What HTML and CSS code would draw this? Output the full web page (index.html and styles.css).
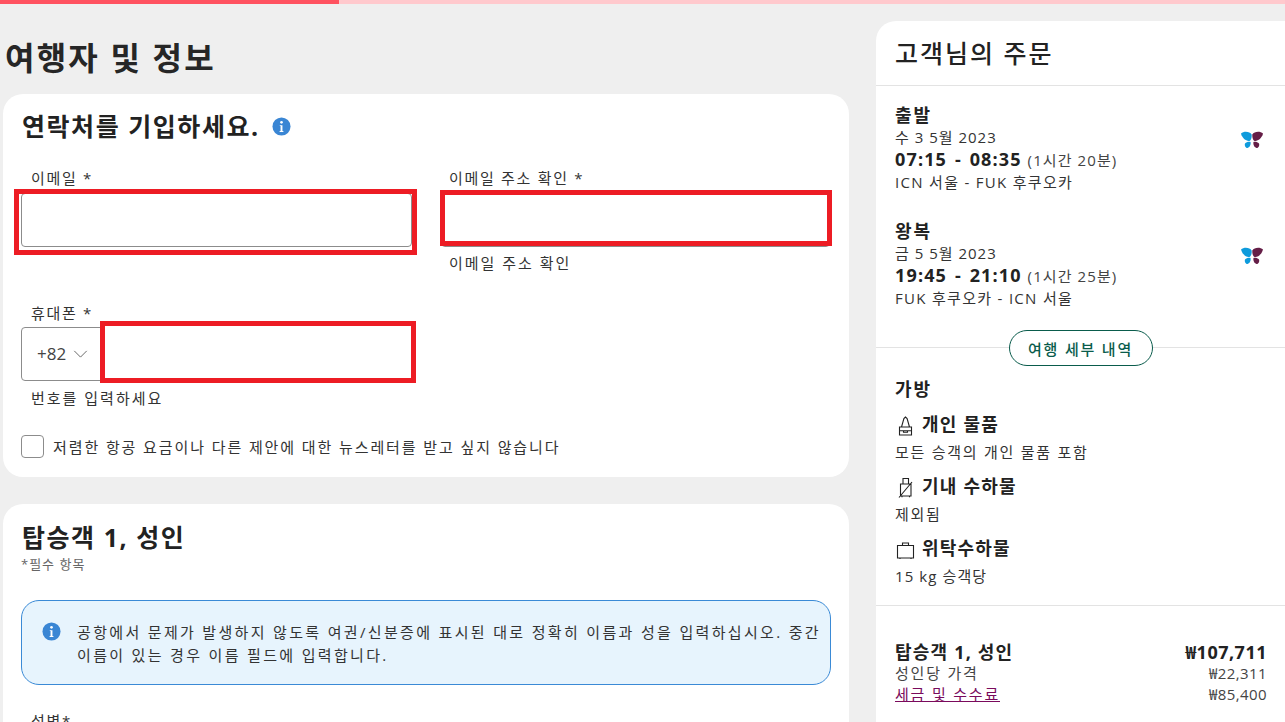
FILE: index.html
```html
<!DOCTYPE html>
<html lang="ko">
<head>
<meta charset="utf-8">
<title>여행자 및 정보</title>
<link rel="stylesheet" href="styles.css">
</head>
<body>
<div class="progress"><div class="progress-fill"></div></div>
<div class="layout">
  <main class="main">
    <h1 class="page-title">여행자 및 정보</h1>
    <section class="card contact">
      <div class="card-head">
        <h2 class="card-title">연락처를 기입하세요.</h2>
        <svg class="info" viewBox="0 0 20 20"><circle cx="10" cy="10" r="9.5" fill="#3a86d4"/><circle cx="10" cy="5.6" r="1.4" fill="#fff"/><path d="M8.2 8.6h2.8v6.2h1v1H8v-1h1v-5.2H8.2z" fill="#fff"/></svg>
      </div>
      <div class="form-grid">
        <div class="field">
          <label class="field-label">이메일 *</label>
          <div class="input-wrap">
            <div class="input"></div>
            <span class="mark mark-email"></span>
          </div>
        </div>
        <div class="field field-alt">
          <label class="field-label">이메일 주소 확인 *</label>
          <div class="input-wrap">
            <div class="input"></div>
            <span class="mark mark-confirm"></span>
          </div>
          <p class="helper">이메일 주소 확인</p>
        </div>
        <div class="field phone-field">
          <label class="field-label">휴대폰 *</label>
          <div class="input-wrap">
            <div class="input phone-input">
              <span class="dial">+82</span>
              <svg class="chev" viewBox="0 0 16 9"><path d="M1 1l7 7 7-7" fill="none" stroke="#666" stroke-width="1.1"/></svg>
            </div>
            <span class="mark mark-phone"></span>
          </div>
          <p class="helper">번호를 입력하세요</p>
        </div>
      </div>
      <div class="check-row">
        <span class="checkbox"></span>
        <span class="check-text">저렴한 항공 요금이나 다른 제안에 대한 뉴스레터를 받고 싶지 않습니다</span>
      </div>
    </section>
    <section class="card passenger">
      <h2 class="card-title">탑승객 1, 성인</h2>
      <p class="required">*필수 항목</p>
      <div class="notice">
        <svg class="info notice-icon" viewBox="0 0 20 20"><circle cx="10" cy="10" r="9.5" fill="#3a86d4"/><circle cx="10" cy="5.6" r="1.4" fill="#fff"/><path d="M8.2 8.6h2.8v6.2h1v1H8v-1h1v-5.2H8.2z" fill="#fff"/></svg>
        <p class="notice-text">공항에서 문제가 발생하지 않도록 여권/신분증에 표시된 대로 정확히 이름과 성을 입력하십시오. 중간 이름이 있는 경우 이름 필드에 입력합니다.</p>
      </div>
      <label class="field-label gender">성별*</label>
    </section>
  </main>
  <aside class="side">
    <h2 class="side-title">고객님의 주문</h2>
    <div class="trip">
      <div class="leg">
        <div class="leg-info">
          <h3 class="leg-title">출발</h3>
          <p class="line">수 3 5월 2023</p>
          <p class="time"><b>07:15 - 08:35</b> <span class="dur">(1시간 20분)</span></p>
          <p class="line route">ICN 서울 - FUK 후쿠오카</p>
        </div>
        <svg class="fly" viewBox="0 0 22 18"><path d="M0 2.6C3-.2 9 .6 10.6 3.5c.3 2-.2 5-1.600 6.200C6 10.800 1.300 8 0 2.600z" fill="#0e9bdc"/><path d="M4 12.500c1.500-1.800 4.500-2 5.500-1.400.5 2-.5 5.500-3 5.900-2 .2-3.200-2.700-2.500-4.500z" fill="#0e9bdc"/><path d="M22 2.600C19-.2 13 .6 11.400 3.500c-.3 2 .2 5 1.600 6.200 3 1.100 7.700-1.700 9-7.100z" fill="#651e47"/><path d="M18 12.500c-1.500-1.800-4.500-2-5.500-1.400-.5 2 .5 5.500 3 5.900 2 .2 3.200-2.700 2.500-4.500z" fill="#651e47"/></svg>
      </div>
      <div class="leg">
        <div class="leg-info">
          <h3 class="leg-title">왕복</h3>
          <p class="line">금 5 5월 2023</p>
          <p class="time"><b>19:45 - 21:10</b> <span class="dur">(1시간 25분)</span></p>
          <p class="line route">FUK 후쿠오카 - ICN 서울</p>
        </div>
        <svg class="fly" viewBox="0 0 22 18"><path d="M0 2.6C3-.2 9 .6 10.6 3.5c.3 2-.2 5-1.600 6.200C6 10.800 1.300 8 0 2.600z" fill="#0e9bdc"/><path d="M4 12.500c1.500-1.800 4.500-2 5.500-1.400.5 2-.5 5.500-3 5.900-2 .2-3.200-2.700-2.500-4.500z" fill="#0e9bdc"/><path d="M22 2.600C19-.2 13 .6 11.400 3.500c-.3 2 .2 5 1.600 6.200 3 1.100 7.700-1.700 9-7.100z" fill="#651e47"/><path d="M18 12.500c-1.500-1.800-4.500-2-5.500-1.400-.5 2 .5 5.500 3 5.900 2 .2 3.200-2.700 2.500-4.500z" fill="#651e47"/></svg>
      </div>
    </div>
    <div class="divider-btn"><button class="pill">여행 세부 내역</button></div>
    <div class="bags">
      <h3 class="leg-title">가방</h3>
      <div class="bag-head">
        <svg class="bag-icon" viewBox="0 0 20 20"><path d="M10.500 1l-1.600 1.500-2.400 8.500h8l-2.400-8.500zM4.500 11h12v8h-12zM4.500 14.800h12M8.500 14.800v1.500h4v-1.500" fill="none" stroke="#222" stroke-width="1.100"/></svg>
        <span class="bag-title">개인 물품</span>
      </div>
      <p class="line bag-desc">모든 승객의 개인 물품 포함</p>
      <div class="bag-head">
        <svg class="bag-icon" viewBox="0 0 20 20"><path d="M8 .5h5.500v5.500H8zM5.500 6h10.500v12H5.500zM4 19.500L17 4M7 18v1.200M14.500 18v1.200" fill="none" stroke="#222" stroke-width="1.100"/></svg>
        <span class="bag-title">기내 수하물</span>
      </div>
      <p class="line bag-desc">제외됨</p>
      <div class="bag-head">
        <svg class="bag-icon" viewBox="0 0 20 20"><path d="M2.500 5.500h16v12.500h-16zM7.500 5.500V3h6v2.500M5 18v1M16 18v1" fill="none" stroke="#222" stroke-width="1.100"/></svg>
        <span class="bag-title">위탁수하물</span>
      </div>
      <p class="line bag-desc bag-desc-num">15 kg 승객당</p>
    </div>
    <div class="price">
      <div class="price-row price-total"><span class="price-name">탑승객 1, 성인</span><span>₩107,711</span></div>
      <div class="price-row"><span class="price-name">성인당 가격</span><span>₩22,311</span></div>
      <div class="price-row"><a class="fee-link price-name">세금 및 수수료</a><span>₩85,400</span></div>
    </div>
  </aside>
</div>
</body>
</html>
```
FILE: styles.css
```css
* { box-sizing: border-box; }
html, body { margin: 0; height: 722px; overflow: hidden; }
body {
  background: #efefef;
  color: #222;
  font-family: "Open Sans", "Noto Sans CJK KR", sans-serif;
  font-size: 15px;
}
p, h1, h2, h3 { margin: 0; }

.progress { height: 4px; background: #ffc9cd; }
.progress-fill { width: 339px; height: 100%; background: #ff5260; }

.layout { display: flex; gap: 27px; padding-left: 3px; align-items: flex-start; }
.main { width: 846px; flex: none; }

.page-title { font-size: 32px; line-height: 42px; font-weight: 700; margin: 33px 0 15px 2px; letter-spacing: 2.2px; color: #262626; }

.card { background: #fff; border-radius: 20px; padding: 0 18px; }
.contact { height: 383px; padding-top: 14px; margin-bottom: 27px; }
.card-head { display: flex; align-items: center; gap: 12px; height: 36px; }
.card-title { font-size: 25px; line-height: 36px; font-weight: 700; color: #222; letter-spacing: 1.55px; margin-left: 1px; }
.info { width: 19px; height: 19px; flex: none; }

.form-grid { display: grid; grid-template-columns: 391px 389px; column-gap: 29px; margin-top: 23px; }
.field-label { display: block; font-size: 15px; line-height: 22px; padding-left: 10px; letter-spacing: 1.7px; color: #333; }
.field-alt .field-label, .field-alt .helper { padding-left: 8px; }
.input-wrap { position: relative; height: 54px; margin-top: 4px; }
.input { height: 54px; border: 1px solid #8c8c8c; border-radius: 4px; background: #fff; }
.helper { font-size: 15px; line-height: 22px; padding-left: 10px; margin-top: 5px; letter-spacing: 2px; color: #333; }
.phone-field { grid-column: 1; margin-top: 28px; }
.phone-field .input-wrap { margin-top: 3px; }
.phone-input { display: flex; align-items: center; padding-left: 15px; gap: 7px; font-size: 17px; color: #444; }
.dial { line-height: 22px; }
.chev { width: 15px; height: 8px; }
.phone-field .helper { margin-top: 6px; }

.mark { position: absolute; border: 5px solid #ed1c24; pointer-events: none; }
.mark-email { left: -7px; right: -5px; top: -4px; bottom: -8px; }
.mark-confirm { left: -1px; right: -2px; top: -3px; bottom: 1px; }
.mark-phone { left: 79px; right: -4px; top: -6px; bottom: -2px; background: #fff; }

.check-row { display: flex; align-items: center; gap: 9px; margin-top: 26px; }
.checkbox { width: 23px; height: 23px; border: 1px solid #8c8c8c; border-radius: 4px; background: #fff; flex: none; }
.check-text { font-size: 15px; line-height: 22px; letter-spacing: 1.9px; color: #333; }

.passenger { height: 300px; padding-top: 15px; }
.required { font-size: 13px; line-height: 18px; color: #666; letter-spacing: 1px; margin-top: 0; }
.notice { display: flex; gap: 16px; margin-top: 27px; height: 85px; padding: 20px 8px 0 20px; border: 1px solid #3a8ad6; border-radius: 18px; background: #e7f4fd; }
.notice-icon { margin-top: 1px; }
.notice-text { font-size: 15px; line-height: 23px; letter-spacing: 2.33px; color: #333; word-break: keep-all; }
.gender { margin-top: 25px; }

.side { width: 420px; flex: none; margin-top: 17px; background: #fff; border-radius: 20px 0 0 0; height: 720px; }
.side-title { font-size: 25px; line-height: 36px; font-weight: 500; padding: 14px 19px 14px; border-bottom: 1px solid #e3e3e3; letter-spacing: 2px; }
.trip { padding: 18px 19px 0; height: 262px; border-bottom: 1px solid #e3e3e3; }
.leg { display: flex; justify-content: space-between; width: 368px; height: 116px; }
.leg-title { font-size: 18px; line-height: 23px; font-weight: 700; letter-spacing: 2px; }
.line { font-size: 15px; line-height: 20px; color: #333; letter-spacing: 1px; }
.route { letter-spacing: 1.3px; }
.time { line-height: 24px; font-size: 15px; }
.time b { font-size: 18px; font-weight: 700; letter-spacing: 1.15px; word-spacing: 2px; }
.dur { font-size: 15px; color: #444; letter-spacing: 1.100px; margin-left: 2px; }
.fly { width: 22px; height: 18px; margin: 27px 0 0; flex: none; }

.divider-btn { display: flex; justify-content: center; width: 409px; height: 0; }
.pill { height: 36px; width: 144px; flex: none; margin-top: -18px; border: 1px solid #0a5c4c; border-radius: 18px; background: #fff; color: #0a5c4c; font: 500 15px "Open Sans", "Noto Sans CJK KR", sans-serif; letter-spacing: 1.8px; padding: 0; }

.bags { padding: 30px 19px 0; height: 258px; width: 409px; border-bottom: 1px solid #e3e3e3; }
.bag-head { display: flex; align-items: center; gap: 7px; height: 24px; margin-top: 11px; }
.bag-icon { width: 20px; height: 20px; flex: none; margin-top: 4px; }
.bag-title { font-size: 18px; font-weight: 700; letter-spacing: 1.2px; line-height: 24px; }
.bag-desc { margin-top: 5px; line-height: 22px; letter-spacing: 1.75px; }
.bag-desc-num { letter-spacing: 1.1px; }

.price { padding: 35px 18px 0 19px; width: 409px; }
.price-row { display: flex; justify-content: space-between; font-size: 15px; line-height: 21px; color: #444; letter-spacing: .4px; }
.price-name { letter-spacing: 1.8px; }
.price-total { font-size: 18px; font-weight: 700; color: #222; line-height: 22px; letter-spacing: .5px; }
.price-total .price-name { letter-spacing: 1.2px; }
.fee-link { color: #7a0a5c; text-decoration: underline; }
```
